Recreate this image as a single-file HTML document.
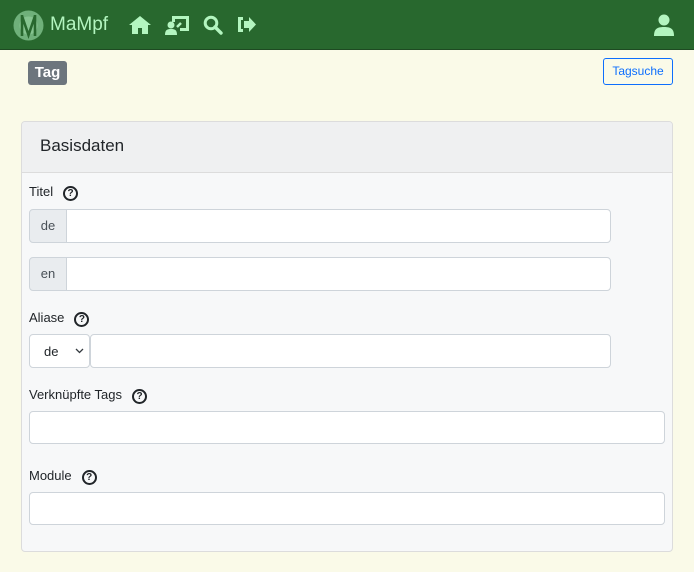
<!DOCTYPE html><html><head><style>
body{margin:0;width:694px;height:572px;background:#fafae8;font-family:"Liberation Sans",sans-serif;position:relative;overflow:hidden}
.nav{position:absolute;left:0;top:0;width:694px;height:49px;background:#28682e;border-bottom:1px solid #1e4a22}
.abs{position:absolute}
.ic{fill:#b3f5bf}
.badge{left:28px;top:61px;width:39px;height:24px;background:#6c757d;border-radius:3px;color:#fff;font-weight:bold;font-size:15px;text-align:center;line-height:24px}
.btn{left:603px;top:58px;width:68px;height:25px;border:1px solid #0d6efd;border-radius:3px;color:#0d6efd;font-size:12px;text-align:center;line-height:25px}
.card{left:21px;top:121px;width:650px;height:429px;border:1px solid #dcdcdc;border-radius:4px;background:#f7f8f9;overflow:hidden}
.hdr{height:50px;background:#eff0f1;border-bottom:1px solid #dcdcdc;font-size:17px;color:#212529;line-height:48px;padding-left:18px}
.lbl{font-size:13px;color:#212529}
.q{display:inline-block;width:11px;height:11px;border:2px solid #212529;border-radius:50%;font-size:10px;font-weight:bold;text-align:center;line-height:11px;margin-left:10px;vertical-align:0px}
.inp{background:#fff;border:1px solid #ced4da;border-radius:4px;box-sizing:border-box}
.pre{background:#e9ecef;border:1px solid #ced4da;border-radius:4px 0 0 4px;box-sizing:border-box;font-size:13px;color:#495057;text-align:center}
</style></head><body>
<div class="nav">
<svg class="abs" style="left:13px;top:10px" width="31" height="31" viewBox="0 0 31 31"><circle cx="15.5" cy="15.5" r="15" fill="#6fb07a"/><circle cx="15.5" cy="15.5" r="9" fill="#86c490"/><path d="M9 5v21M22 5v21M9 6l6.5 19L22 6" stroke="#28682e" stroke-width="2.6" fill="none"/></svg>
<div class="abs" style="left:50px;top:14px;font-size:19px;color:#b3f5bf">MaMpf</div>
<svg class="abs ic" style="left:129px;top:15px" width="22" height="19" viewBox="0 0 22 19"><path d="M11 1L0 10h3v9h6v-6h4v6h6v-9h3z"/></svg>
<svg class="abs ic" style="left:165px;top:14px" width="25" height="22" viewBox="0 0 25 22"><circle cx="6" cy="11" r="3.5"/><path d="M0 21c0-5 2-6 6-6s6 1 6 6z"/><path d="M7 2h17v15h-9v-3h6V5H10v3H7z"/><path d="M12 13l4-4" stroke="#b3f5bf" stroke-width="2.5"/></svg>
<svg class="abs" style="left:203px;top:15px" width="20" height="20" viewBox="0 0 20 20"><circle cx="8" cy="8" r="5.8" stroke="#b3f5bf" stroke-width="3" fill="none"/><path d="M12 12l6 6" stroke="#b3f5bf" stroke-width="3.4" stroke-linecap="round"/></svg>
<svg class="abs ic" style="left:236px;top:16px" width="20" height="17" viewBox="0 0 20 17"><path d="M7 1H2v15h5v-3H5V4h2z"/><path d="M8 5h5V1l7 7.5-7 7.5v-4H8z"/></svg>
<svg class="abs ic" style="left:654px;top:14px" width="20" height="22" viewBox="0 0 20 22"><circle cx="10" cy="6" r="5.5"/><path d="M0 22c0-7 3-9 10-9s10 2 10 9z"/></svg>
</div>
<div class="abs badge">Tag</div>
<div class="abs btn">Tagsuche</div>
<div class="abs card"><div class="hdr">Basisdaten</div></div>
<div class="abs lbl" style="left:29px;top:184px">Titel<span class="q">?</span></div>
<div class="abs pre" style="left:29px;top:209px;width:38px;height:34px;line-height:32px">de</div>
<div class="abs inp" style="left:66px;top:209px;width:545px;height:34px;border-radius:0 4px 4px 0"></div>
<div class="abs pre" style="left:29px;top:257px;width:38px;height:34px;line-height:32px">en</div>
<div class="abs inp" style="left:66px;top:257px;width:545px;height:34px;border-radius:0 4px 4px 0"></div>
<div class="abs lbl" style="left:29px;top:310px">Aliase<span class="q">?</span></div>
<div class="abs inp" style="left:29px;top:334px;width:61px;height:34px;font-size:13px;color:#212529;line-height:34px;padding-left:14px">de</div>
<svg class="abs" style="left:75px;top:348px" width="9" height="6" viewBox="0 0 9 6"><path d="M1 1l3.5 3.5L8 1" stroke="#343a40" stroke-width="1.3" fill="none"/></svg>
<div class="abs inp" style="left:90px;top:334px;width:521px;height:34px"></div>
<div class="abs lbl" style="left:29px;top:387px">Verknüpfte Tags<span class="q">?</span></div>
<div class="abs inp" style="left:29px;top:411px;width:636px;height:33px"></div>
<div class="abs lbl" style="left:29px;top:468px">Module<span class="q">?</span></div>
<div class="abs inp" style="left:29px;top:492px;width:636px;height:33px"></div>
</body></html>
